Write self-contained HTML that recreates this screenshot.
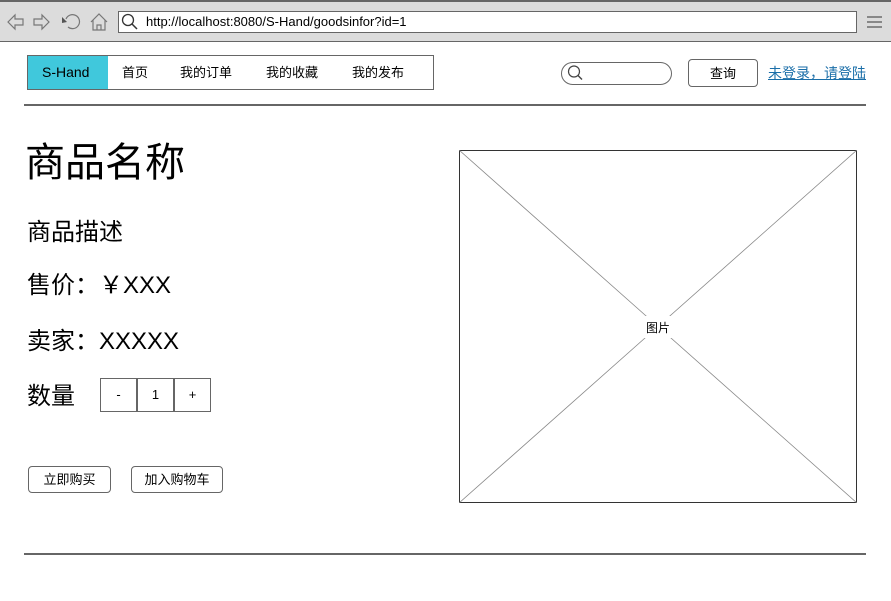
<!DOCTYPE html>
<html><head><meta charset="utf-8"><style>
*{margin:0;padding:0;box-sizing:border-box}
body{width:891px;height:601px;background:#fff;position:relative;overflow:hidden;font-family:"Liberation Sans","Noto Sans CJK SC",sans-serif;color:#000}
.abs{position:absolute}
.chrome{left:0;top:0;width:891px;height:42px;background:#dcdcdc;border-top:2px solid #666;border-bottom:1px solid #666}
.addr{left:118px;top:11px;width:739px;height:22px;background:#fff;border:1px solid #666;font-size:13px;line-height:20px;padding-left:27px}
.nav{left:27px;top:55px;width:407px;height:35px;border:1px solid #666;font-size:13px}
.nav span{position:absolute;top:0;line-height:33px}
.btn{border:1px solid #666;border-radius:4px;font-size:13px;text-align:center;background:#fff}
.q{top:378px;width:37px;height:34px;border:1px solid #666;font-size:13px;text-align:center;line-height:32px}
</style></head><body>
<div class="abs chrome"></div>
<svg class="abs" style="left:0;top:0" width="120" height="42">
<g fill="none" stroke="#777" stroke-width="1.2">
<path d="M8 22 L15 15 L15 19 L23 19 L23 25 L15 25 L15 29 Z"/>
<path d="M49 22 L42 15 L42 19 L34 19 L34 25 L42 25 L42 29 Z"/>
<path d="M66 19 A7 7 0 1 1 68 27"/>
<path d="M91 22 L99 14 L107 22 M93 20 L93 30 L105 30 L105 20 M97 30 L97 25 L101 25 L101 30"/>
</g>
<path d="M62 17 L67 22 L62 23 Z" fill="#555"/>
</svg>
<div class="abs addr">http://localhost:8080/S-Hand/goodsinfor?id=1</div>
<svg class="abs" style="left:121px;top:13px" width="20" height="20"><circle cx="7" cy="7" r="5.5" fill="none" stroke="#333" stroke-width="1.3"/><path d="M11 11 L16 16" stroke="#333" stroke-width="1.5"/></svg>
<svg class="abs" style="left:866px;top:14px" width="18" height="16"><path d="M1 3H16M1 8H16M1 13H16" stroke="#555" stroke-width="1.2"/></svg>

<div class="abs nav">
<div class="abs" style="left:0;top:0;width:80px;height:33px;background:#40c8dc"></div>
<span style="left:14px;font-size:14px">S-Hand</span>
<span style="left:94px">首页</span>
<span style="left:152px">我的订单</span>
<span style="left:238px">我的收藏</span>
<span style="left:324px">我的发布</span>
</div>
<div class="abs" style="left:561px;top:62px;width:111px;height:23px;border:1px solid #666;border-radius:12px"></div>
<svg class="abs" style="left:566px;top:64px" width="20" height="20"><circle cx="8" cy="7.5" r="5.5" fill="none" stroke="#444" stroke-width="1.2"/><path d="M12 11.5 L16 15.5" stroke="#444" stroke-width="1.4"/></svg>
<div class="abs btn" style="left:688px;top:59px;width:70px;height:28px;line-height:27px">查询</div>
<div class="abs" style="left:768px;top:64px;font-size:14px;color:#1a6ea8;text-decoration:underline;line-height:18px">未登录，请登陆</div>
<div class="abs" style="left:24px;top:104px;width:842px;height:2px;background:#666"></div>

<div class="abs" style="left:25px;top:138px;font-size:40px;line-height:50px">商品名称</div>
<div class="abs" style="left:27px;top:217px;font-size:24px;line-height:32px">商品描述</div>
<div class="abs" style="left:27px;top:270px;font-size:24px;line-height:32px">售价：￥XXX</div>
<div class="abs" style="left:27px;top:326px;font-size:24px;line-height:32px">卖家：XXXXX</div>
<div class="abs" style="left:27px;top:381px;font-size:24px;line-height:32px">数量</div>
<div class="abs q" style="left:100px">-</div>
<div class="abs q" style="left:137px">1</div>
<div class="abs q" style="left:174px">+</div>
<div class="abs btn" style="left:28px;top:466px;width:83px;height:27px;line-height:26px">立即购买</div>
<div class="abs btn" style="left:131px;top:466px;width:92px;height:27px;line-height:26px">加入购物车</div>

<svg class="abs" style="left:459px;top:150px" width="398" height="353">
<rect x="0.5" y="0.5" width="397" height="352" fill="#fff" stroke="#333"/>
<path d="M0 0L398 353M398 0L0 353" stroke="#888" stroke-width="0.8"/>
<rect x="180" y="166" width="38" height="22" fill="#fff"/>
<text x="199" y="182" font-size="12" text-anchor="middle" font-family="Liberation Sans,Noto Sans CJK SC,sans-serif">图片</text>
</svg>
<div class="abs" style="left:24px;top:553px;width:842px;height:2px;background:#666"></div>
</body></html>
